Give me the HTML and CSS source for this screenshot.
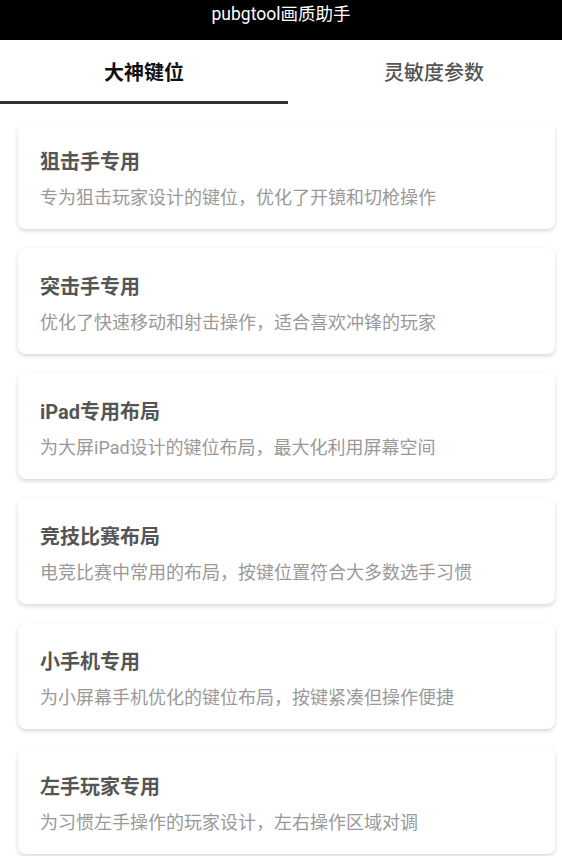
FILE: index.html
```html
<!DOCTYPE html>
<html lang="zh">
<head>
    <meta charset="UTF-8">
    <meta name="viewport" content="width=device-width, initial-scale=1.0">
    <title>pubgtool画质助手</title>
    <link rel="stylesheet" href="styles.css">
</head>
<body>
    <div class="app-bar">pubgtool画质助手</div>
    <div class="tabs">
        <div class="tab active">大神键位</div>
        <div class="tab other">灵敏度参数</div>
    </div>
    <div class="list">
        <div class="card">
            <div class="card-title">狙击手专用</div>
            <div class="card-desc">专为狙击玩家设计的键位，优化了开镜和切枪操作</div>
        </div>
        <div class="card">
            <div class="card-title">突击手专用</div>
            <div class="card-desc">优化了快速移动和射击操作，适合喜欢冲锋的玩家</div>
        </div>
        <div class="card">
            <div class="card-title">iPad专用布局</div>
            <div class="card-desc">为大屏iPad设计的键位布局，最大化利用屏幕空间</div>
        </div>
        <div class="card">
            <div class="card-title">竞技比赛布局</div>
            <div class="card-desc">电竞比赛中常用的布局，按键位置符合大多数选手习惯</div>
        </div>
        <div class="card">
            <div class="card-title">小手机专用</div>
            <div class="card-desc">为小屏幕手机优化的键位布局，按键紧凑但操作便捷</div>
        </div>
        <div class="card">
            <div class="card-title">左手玩家专用</div>
            <div class="card-desc">为习惯左手操作的玩家设计，左右操作区域对调</div>
        </div>
    </div>
</body>
</html>
```

FILE: styles.css
```css
body {
    margin: 0;
    background: #fff;
    font-family: Roboto, "Noto Sans CJK SC", sans-serif;
    overflow: hidden;
}
.app-bar {
    height: 40px;
    box-sizing: border-box;
    padding-top: 2px;
    background: #000;
    color: #fff;
    font-size: 17.5px;
    line-height: 24px;
    text-align: center;
}
.tabs {
    display: flex;
    height: 64px;
}
.tab {
    font-size: 20px;
    text-align: center;
    box-sizing: border-box;
}
.tab.active {
    width: 288px;
    font-weight: bold;
    color: #111;
    border-bottom: 3px solid #333;
    line-height: 66px;
}
.tab.other {
    flex: 1;
    padding-left: 18px;
    color: #555;
    font-weight: 500;
    line-height: 66px;
}
.list {
    padding: 19px 7px 0 18px;
}
.card {
    background: #fff;
    border-radius: 8px;
    box-shadow: 0 2px 4px rgba(0, 0, 0, 0.16);
    padding: 24px 22px 19px;
    margin-bottom: 19px;
}
.card-title {
    font-size: 20px;
    line-height: 30px;
    font-weight: bold;
    color: #555;
    margin-bottom: 9px;
}
.card-desc {
    font-size: 18px;
    line-height: 24px;
    color: #999;
}
```
